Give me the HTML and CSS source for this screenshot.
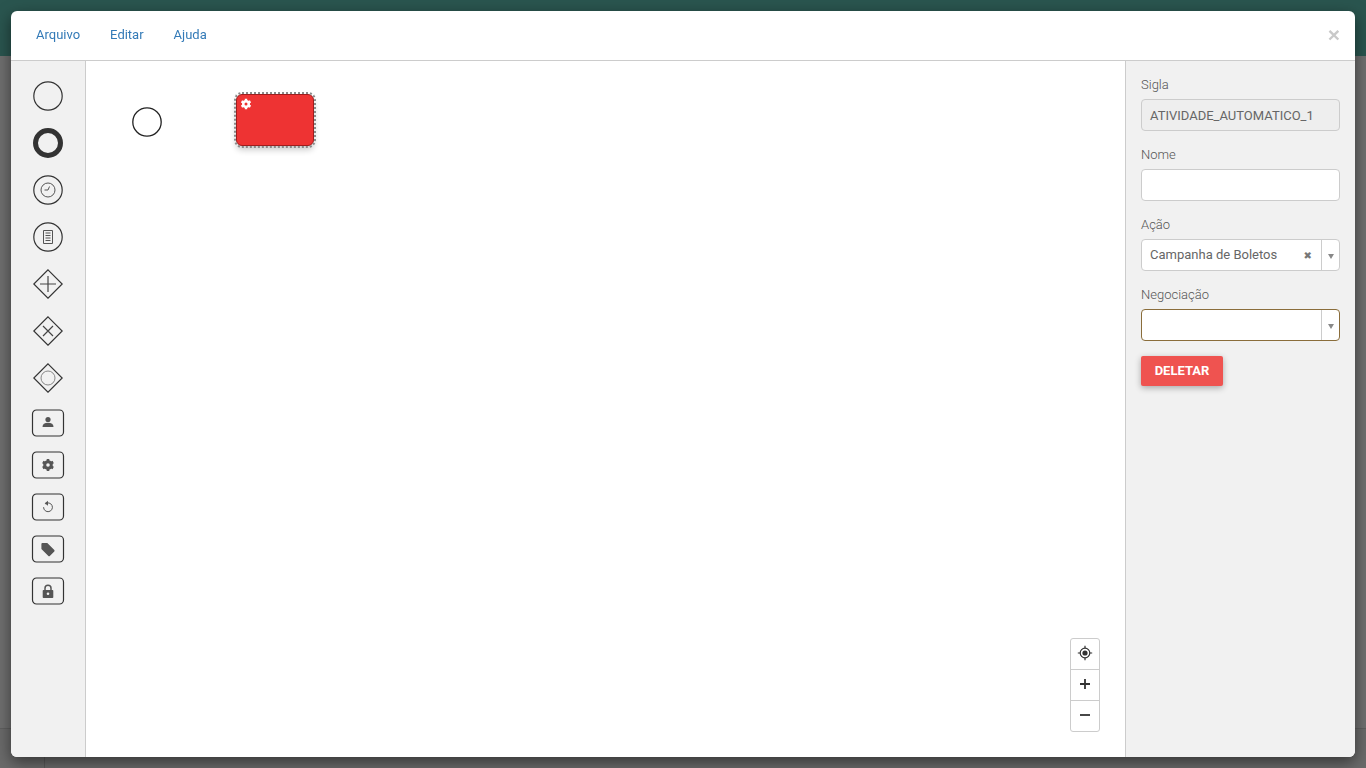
FILE: index.html
```html
<!DOCTYPE html>
<html lang="pt-BR">
  <head>
    <meta charset="utf-8" />
    <meta name="viewport" content="width=device-width, initial-scale=1.0" />
    <title>Editor de fluxo</title>
    <link rel="stylesheet" href="styles.css">
  </head>

  <body>
    <!-- pagina escurecida atras do modal -->
    <div class="fundo">
      <div class="fundo-topo"></div>
      <div class="fundo-meio"></div>
      <div class="fundo-rodape"><div class="fundo-coluna"></div></div>
    </div>

    <div class="modal">
      <header class="modal-topo">
        <nav class="menu">
          <a href="#">Arquivo</a>
          <a href="#">Editar</a>
          <a href="#">Ajuda</a>
        </nav>
        <button class="fechar">×</button>
      </header>

      <div class="modal-corpo">
        <aside class="paleta">
          <svg class="evento" viewBox="0 0 30 30"><circle cx="15" cy="15" r="14.2" /></svg>
          <svg class="evento" viewBox="0 0 30 30"><circle class="grosso" cx="15" cy="15" r="12.500" /></svg>
          <svg class="evento" viewBox="0 0 30 30">
            <circle cx="15" cy="15" r="14.200" />
            <circle class="fino" cx="15" cy="15" r="7" />
            <path class="fino" d="M15 15l1.500-3.500M15 15h-3.500" />
          </svg>
          <svg class="evento" viewBox="0 0 30 30">
            <circle cx="15" cy="15" r="14.200" />
            <path class="fino" d="M10.500 8.500h9v13h-9zM12.500 11h5M12.500 13.500h5M12.500 16h5M12.500 18.500h5" />
          </svg>
          <svg class="evento" viewBox="0 0 30 30">
            <path d="M15 .8L29.200 15 15 29.200.8 15z" />
            <path class="traco" d="M15 7v16M7 15h16" />
          </svg>
          <svg class="evento" viewBox="0 0 30 30">
            <path d="M15 .8L29.200 15 15 29.200.8 15z" />
            <path class="traco" d="M10 10l10 10M20 10L10 20" />
          </svg>
          <svg class="evento" viewBox="0 0 30 30">
            <path d="M15 .8L29.200 15 15 29.200.8 15z" />
            <circle class="claro" cx="15" cy="15" r="7" />
          </svg>

          <svg class="tarefa tarefa-primeira" viewBox="0 0 34 28">
            <rect x="1.500" y="1" width="31" height="26" rx="4" />
            <circle class="cheio" cx="17" cy="10.500" r="2.600" />
            <path class="cheio" d="M11.500 18c0-3 2-4.300 5.500-4.300s5.500 1.300 5.500 4.300z" />
          </svg>
          <svg class="tarefa" viewBox="0 0 34 28">
            <rect x="1.500" y="1" width="31" height="26" rx="4" />
            <path class="dente" d="M17 8v12M11.800 11l10.400 6M11.800 17l10.400-6" />
            <circle class="cheio" cx="17" cy="14" r="4.800" />
            <circle class="furo" cx="17" cy="14" r="1.800" />
          </svg>
          <svg class="tarefa" viewBox="0 0 34 28">
            <rect x="1.500" y="1" width="31" height="26" rx="4" />
            <path class="fino" d="M14.300 10.800a4.400 4.400 0 1 1-1.700 3.400" />
            <path class="cheio" d="M17 7.800v5l-3.300-2.500z" />
          </svg>
          <svg class="tarefa" viewBox="0 0 34 28">
            <rect x="1.500" y="1" width="31" height="26" rx="4" />
            <path class="cheio" d="M10.500 8h5.800l7 7c.4.400.4 1 0 1.400l-4.500 4.500c-.4.400-1 .4-1.400 0l-7-7V8.900c0-.5.400-.9.900-.9z" />
          </svg>
          <svg class="tarefa" viewBox="0 0 34 28">
            <rect x="1.500" y="1" width="31" height="26" rx="4" />
            <path class="arco" d="M14 13.500v-2.300a3 3 0 0 1 6 0v2.300" />
            <path class="cheio" d="M12.500 13h9c.4 0 .8.400.8.800v6.400c0 .4-.4.800-.8.800h-9c-.4 0-.8-.4-.8-.8v-6.400c0-.4.400-.8.800-.8z" />
            <circle class="furo" cx="17" cy="16.800" r="1.300" />
          </svg>
        </aside>

        <main class="tela">
          <svg class="no-inicio" viewBox="0 0 30 30"><circle cx="15" cy="15" r="14.200" /></svg>
          <div class="no-atividade">
            <svg class="engrenagem" viewBox="0 0 12 12">
              <path class="dente" d="M6 .8v10.400M1.500 3.400l9 5.200M1.500 8.600l9-5.200" />
              <circle class="cheio" cx="6" cy="6" r="4" />
              <circle class="furo" cx="6" cy="6" r="1.500" />
            </svg>
          </div>

          <div class="zoom">
            <button>
              <svg viewBox="0 0 16 16">
                <circle class="anel" cx="8" cy="8" r="4.800" />
                <circle class="cheio" cx="8" cy="8" r="2.600" />
                <path class="anel" d="M8 .8v2.400M8 12.800v2.400M.8 8h2.400M12.800 8h2.400" />
              </svg>
            </button>
            <button><svg viewBox="0 0 16 16"><path class="sinal" d="M8 3v10M3 8h10" /></svg></button>
            <button><svg viewBox="0 0 16 16"><path class="sinal" d="M3 8h10" /></svg></button>
          </div>
        </main>

        <aside class="painel">
          <div class="campo">
            <label>Sigla</label>
            <div class="entrada desabilitada">ATIVIDADE_AUTOMATICO_1</div>
          </div>
          <div class="campo">
            <label>Nome</label>
            <div class="entrada"></div>
          </div>
          <div class="campo">
            <label>Ação</label>
            <div class="entrada selecao">
              <span class="valor">Campanha de Boletos</span>
              <span class="limpar">✖</span>
              <span class="seta"></span>
            </div>
          </div>
          <div class="campo">
            <label>Negociação</label>
            <div class="entrada selecao aviso">
              <span class="valor"></span>
              <span class="seta"></span>
            </div>
          </div>
          <button class="deletar">DELETAR</button>
        </aside>
      </div>
    </div>
  </body>
</html>
```

FILE: styles.css
```css
* {
  box-sizing: border-box;
}

html,
body {
  height: 100%;
}

body {
  margin: 0;
  overflow: hidden;
  font-family: Roboto, "Liberation Sans", sans-serif;
  font-size: 13px;
  color: #666;
  background-color: #6f6f6f;
}

/* fundo */
.fundo {
  display: flex;
  flex-direction: column;
  height: 100vh;
}

.fundo-topo {
  height: 56px;
  background-color: #2a554f;
}

.fundo-meio {
  flex: 1;
  background-color: #6f6f6f;
}

.fundo-rodape {
  height: 40px;
  border-top: 1px solid #5f5f5f;
  background-color: #6a6a6a;
}

.fundo-coluna {
  width: 45px;
  height: 100%;
  border-right: 1px solid #5a5a5a;
}

/* modal */
.modal {
  position: fixed;
  top: 11px;
  right: 11px;
  bottom: 11px;
  left: 11px;
  display: flex;
  flex-direction: column;
  border-radius: 6px;
  background-color: #fff;
  box-shadow: 0 5px 15px rgba(0, 0, 0, 0.5);
  overflow: hidden;
}

.modal-topo {
  display: flex;
  justify-content: space-between;
  align-items: center;
  height: 50px;
  padding: 0 15px 2px 25px;
  border-bottom: 1px solid #ccc;
}

.menu {
  display: flex;
  gap: 30px;
}

.menu a {
  color: #337ab7;
  text-decoration: none;
}

.fechar {
  padding: 0;
  border: 0;
  background: none;
  font-family: "Liberation Sans", sans-serif;
  font-size: 21px;
  font-weight: bold;
  line-height: 1;
  color: #c9c9c9;
}

.modal-corpo {
  flex: 1;
  display: flex;
  min-height: 0;
}

/* paleta de elementos */
.paleta {
  width: 75px;
  flex-shrink: 0;
  display: flex;
  flex-direction: column;
  align-items: center;
  gap: 17px;
  padding-top: 20px;
  border-right: 1px solid #ccc;
  background-color: #f1f1f1;
}

.paleta svg {
  fill: none;
  stroke: #333;
  stroke-width: 1.2;
}

.evento {
  width: 30px;
  height: 30px;
  flex-shrink: 0;
}

.tarefa {
  width: 34px;
  height: 28px;
  flex-shrink: 0;
  margin-top: -3px;
}

.tarefa-primeira {
  margin-top: -1px;
}

.paleta .grosso {
  stroke-width: 5;
}

.paleta .fino {
  stroke: #555;
  stroke-width: 1;
}

.paleta .traco {
  stroke: #444;
  stroke-width: 1.2;
}

.paleta .claro {
  stroke: #888;
  stroke-width: 1;
}

.paleta .cheio {
  fill: #555;
  stroke: none;
}

.paleta .dente {
  stroke: #555;
  stroke-width: 2.6;
}

.paleta .furo {
  fill: #f1f1f1;
  stroke: none;
}

.paleta .arco {
  stroke: #555;
  stroke-width: 1.5;
}

/* area de desenho */
.tela {
  position: relative;
  flex: 1;
  background-color: #fff;
}

.no-inicio {
  position: absolute;
  top: 46px;
  left: 45.5px;
  width: 30px;
  height: 30px;
  fill: none;
  stroke: #222;
  stroke-width: 1.3;
}

.no-atividade {
  position: absolute;
  top: 33px;
  left: 150px;
  width: 78px;
  height: 52px;
  border: 1px solid #a01c1c;
  border-radius: 6px;
  background-color: #ee3333;
  box-shadow: 0 4px 6px rgba(0, 0, 0, 0.2);
  outline: 2px dotted #8a8a8a;
}

.engrenagem {
  position: absolute;
  top: 3px;
  left: 3px;
  width: 12px;
  height: 12px;
}

.engrenagem .dente {
  stroke: #fff;
  stroke-width: 2.4;
}

.engrenagem .cheio {
  fill: #fff;
}

.engrenagem .furo {
  fill: #ee3333;
}

.zoom {
  position: absolute;
  right: 25px;
  bottom: 25px;
  display: flex;
  flex-direction: column;
  width: 30px;
  border: 1px solid #ccc;
  border-radius: 3px;
  background-color: #fff;
}

.zoom button {
  display: flex;
  justify-content: center;
  align-items: center;
  height: 31px;
  padding: 0 0 2px;
  border: 0;
  border-bottom: 1px solid #ccc;
  background: none;
}

.zoom button:last-child {
  height: 30px;
  border-bottom: 0;
}

.zoom svg {
  width: 16px;
  height: 16px;
}

.zoom .anel {
  fill: none;
  stroke: #333;
  stroke-width: 1.2;
}

.zoom .cheio {
  fill: #333;
}

.zoom .sinal {
  fill: none;
  stroke: #333;
  stroke-width: 1.8;
}

/* painel de propriedades */
.painel {
  width: 230px;
  flex-shrink: 0;
  padding: 15px 15px 0;
  border-left: 1px solid #ccc;
  background-color: #f1f1f1;
}

.campo {
  margin-bottom: 15px;
}

.campo label {
  display: block;
  height: 18px;
  margin-bottom: 5px;
  line-height: 18px;
  font-weight: 300;
  color: #555;
}

.entrada {
  display: flex;
  align-items: center;
  height: 32px;
  padding-left: 8px;
  border: 1px solid #ccc;
  border-radius: 4px;
  background-color: #fff;
  color: #666;
}

.desabilitada {
  background-color: #eee;
}

.selecao {
  padding-right: 0;
}

.aviso {
  border-color: #8a6d3b;
}

.valor {
  flex: 1;
  margin-top: -2px;
}

.limpar {
  margin-right: 9px;
  font-family: "DejaVu Sans", sans-serif;
  font-size: 10px;
  color: #777;
}

.seta {
  display: flex;
  justify-content: center;
  align-items: center;
  width: 18px;
  height: 100%;
  border-left: 1px solid #ccc;
}

.seta::after {
  content: "";
  margin-top: 2px;
  border-top: 5px solid #888;
  border-right: 3px solid transparent;
  border-left: 3px solid transparent;
}

.deletar {
  display: block;
  width: 82px;
  height: 30px;
  padding: 0 0 2px;
  border: 0;
  border-radius: 2px;
  background-color: #ef5350;
  box-shadow: 0 2px 6px rgba(0, 0, 0, 0.3);
  font-family: Roboto, "Liberation Sans", sans-serif;
  font-size: 13px;
  font-weight: 700;
  color: #fff;
}
```
